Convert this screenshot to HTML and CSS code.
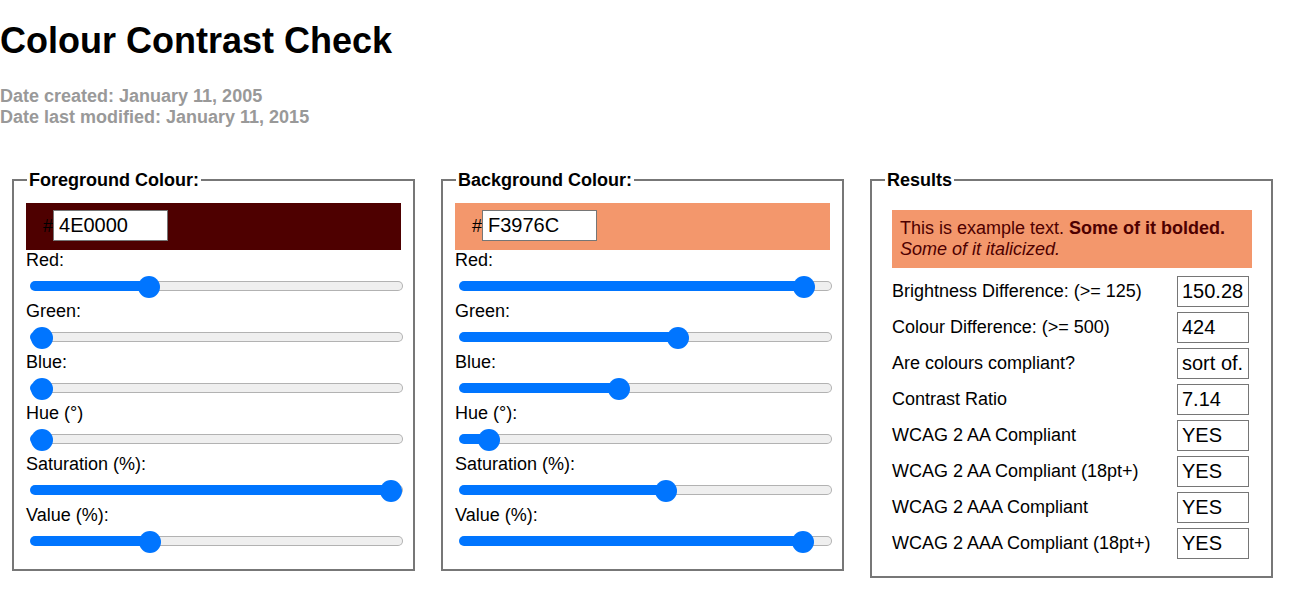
FILE: index.html
```html
<!DOCTYPE html>
<html lang="en">
<head>
<meta charset="utf-8">
<title>Colour Contrast Check</title>
<link rel="stylesheet" href="styles.css">
</head>
<body>
<h1 class="title">Colour Contrast Check</h1>
<p class="meta">Date created: January 11, 2005<br>Date last modified: January 11, 2015</p>

<div class="panels">
  <fieldset class="panel">
    <legend class="legend">Foreground Colour:</legend>
    <div class="swatch swatch-fg"><span class="hash">#</span><input class="hex" type="text" value="4E0000"></div>
    <div class="lbl">Red:</div>
    <input class="slider" type="range" min="0" max="255" value="78" style="--f:0.3059">
    <div class="lbl">Green:</div>
    <input class="slider" type="range" min="0" max="255" value="0" style="--f:0">
    <div class="lbl">Blue:</div>
    <input class="slider" type="range" min="0" max="255" value="0" style="--f:0">
    <div class="lbl">Hue (°)</div>
    <input class="slider" type="range" min="0" max="360" value="0" style="--f:0">
    <div class="lbl">Saturation (%):</div>
    <input class="slider" type="range" min="0" max="100" value="100" style="--f:1">
    <div class="lbl">Value (%):</div>
    <input class="slider" type="range" min="0" max="100" value="31" style="--f:0.31">
  </fieldset>

  <fieldset class="panel">
    <legend class="legend">Background Colour:</legend>
    <div class="swatch swatch-bg"><span class="hash">#</span><input class="hex" type="text" value="F3976C"></div>
    <div class="lbl">Red:</div>
    <input class="slider" type="range" min="0" max="255" value="243" style="--f:0.9529">
    <div class="lbl">Green:</div>
    <input class="slider" type="range" min="0" max="255" value="151" style="--f:0.5922">
    <div class="lbl">Blue:</div>
    <input class="slider" type="range" min="0" max="255" value="108" style="--f:0.4235">
    <div class="lbl">Hue (°):</div>
    <input class="slider" type="range" min="0" max="360" value="19" style="--f:0.0528">
    <div class="lbl">Saturation (%):</div>
    <input class="slider" type="range" min="0" max="100" value="56" style="--f:0.56">
    <div class="lbl">Value (%):</div>
    <input class="slider" type="range" min="0" max="100" value="95" style="--f:0.95">
  </fieldset>

  <fieldset class="panel panel-results">
    <legend class="legend">Results</legend>
    <div class="example">This is example text. <strong>Some of it bolded.</strong><br><em>Some of it italicized.</em></div>
    <div class="results">
      <span class="res-label">Brightness Difference: (&gt;= 125)</span><input class="res-val" type="text" value="150.28">
      <span class="res-label">Colour Difference: (&gt;= 500)</span><input class="res-val" type="text" value="424">
      <span class="res-label">Are colours compliant?</span><input class="res-val" type="text" value="sort of.">
      <span class="res-label">Contrast Ratio</span><input class="res-val" type="text" value="7.14">
      <span class="res-label">WCAG 2 AA Compliant</span><input class="res-val" type="text" value="YES">
      <span class="res-label">WCAG 2 AA Compliant (18pt+)</span><input class="res-val" type="text" value="YES">
      <span class="res-label">WCAG 2 AAA Compliant</span><input class="res-val" type="text" value="YES">
      <span class="res-label">WCAG 2 AAA Compliant (18pt+)</span><input class="res-val" type="text" value="YES">
    </div>
  </fieldset>
</div>
</body>
</html>
```

FILE: styles.css
```css
html, body {
  margin: 0;
  padding: 0;
  background: #fff;
}

body {
  font-family: "Liberation Sans", Arial, sans-serif;
  font-size: 18px;
  color: #000;
}

.title {
  font-size: 36px;
  font-weight: bold;
  line-height: normal;
  margin: 20px 0 24px;
}

.meta {
  margin: 0;
  color: #999;
  font-weight: bold;
  font-size: 18px;
  line-height: normal;
}

.panels {
  display: flex;
  align-items: flex-start;
  gap: 26px;
  margin-top: 41.5px;
  padding-left: 12px;
}

.panel {
  box-sizing: border-box;
  width: 403px;
  margin: 0;
  padding: 12px 12px 12.5px;
  border: 2px solid #777;
  min-width: 0;
}

.legend {
  font-weight: bold;
  font-size: 18px;
  padding: 0 2px;
  margin-left: 1px;
  line-height: normal;
}

.swatch {
  display: flex;
  align-items: baseline;
  padding: 7px 0 9px 17px;
}

.swatch-fg { background: #4e0000; }
.swatch-bg { background: #f3976c; }

.hash {
  color: #000;
  font-size: 18px;
}

.hex {
  box-sizing: border-box;
  width: 115px;
  height: 31px;
  margin: 0;
  padding: 0 5px;
  border: 1px solid #767676;
  border-radius: 0;
  font-family: "Liberation Sans", Arial, sans-serif;
  font-size: 20px;
  color: #000;
  background: #fff;
}

.lbl {
  line-height: normal;
}

.slider {
  -webkit-appearance: none;
  appearance: none;
  display: block;
  width: 373px;
  height: 22px;
  margin: 4px 0 4.2px 4px;
  padding: 0;
  background: transparent;
}

.slider::-webkit-slider-runnable-track {
  height: 10px;
  border: 1px solid transparent;
  border-radius: 6px;
  background:
    linear-gradient(to right, #0075ff calc(12px + (100% - 24px) * var(--f)), transparent calc(12px + (100% - 24px) * var(--f))) border-box,
    linear-gradient(#efefef, #efefef) padding-box,
    linear-gradient(#b2b2b2, #b2b2b2) border-box;
}

.slider::-webkit-slider-thumb {
  -webkit-appearance: none;
  appearance: none;
  width: 22px;
  height: 22px;
  margin-top: -6px;
  border: none;
  border-radius: 50%;
  background: #0075ff;
}

.panel-results {
  padding-bottom: 11.5px;
}

.example {
  margin: 7px 7px 8px 8px;
  padding: 8px;
  background: #f3976c;
  color: #4e0000;
  line-height: normal;
}

.results {
  display: grid;
  grid-template-columns: 1fr 72px;
  align-items: center;
  row-gap: 5px;
  margin: 0 10px 5.5px 8px;
}

.res-label {
  line-height: normal;
}

.res-val {
  box-sizing: border-box;
  width: 72px;
  height: 31px;
  margin: 0;
  padding: 0 4px;
  border: 1px solid #767676;
  border-radius: 0;
  font-family: "Liberation Sans", Arial, sans-serif;
  font-size: 20px;
  color: #000;
  background: #fff;
}
```
